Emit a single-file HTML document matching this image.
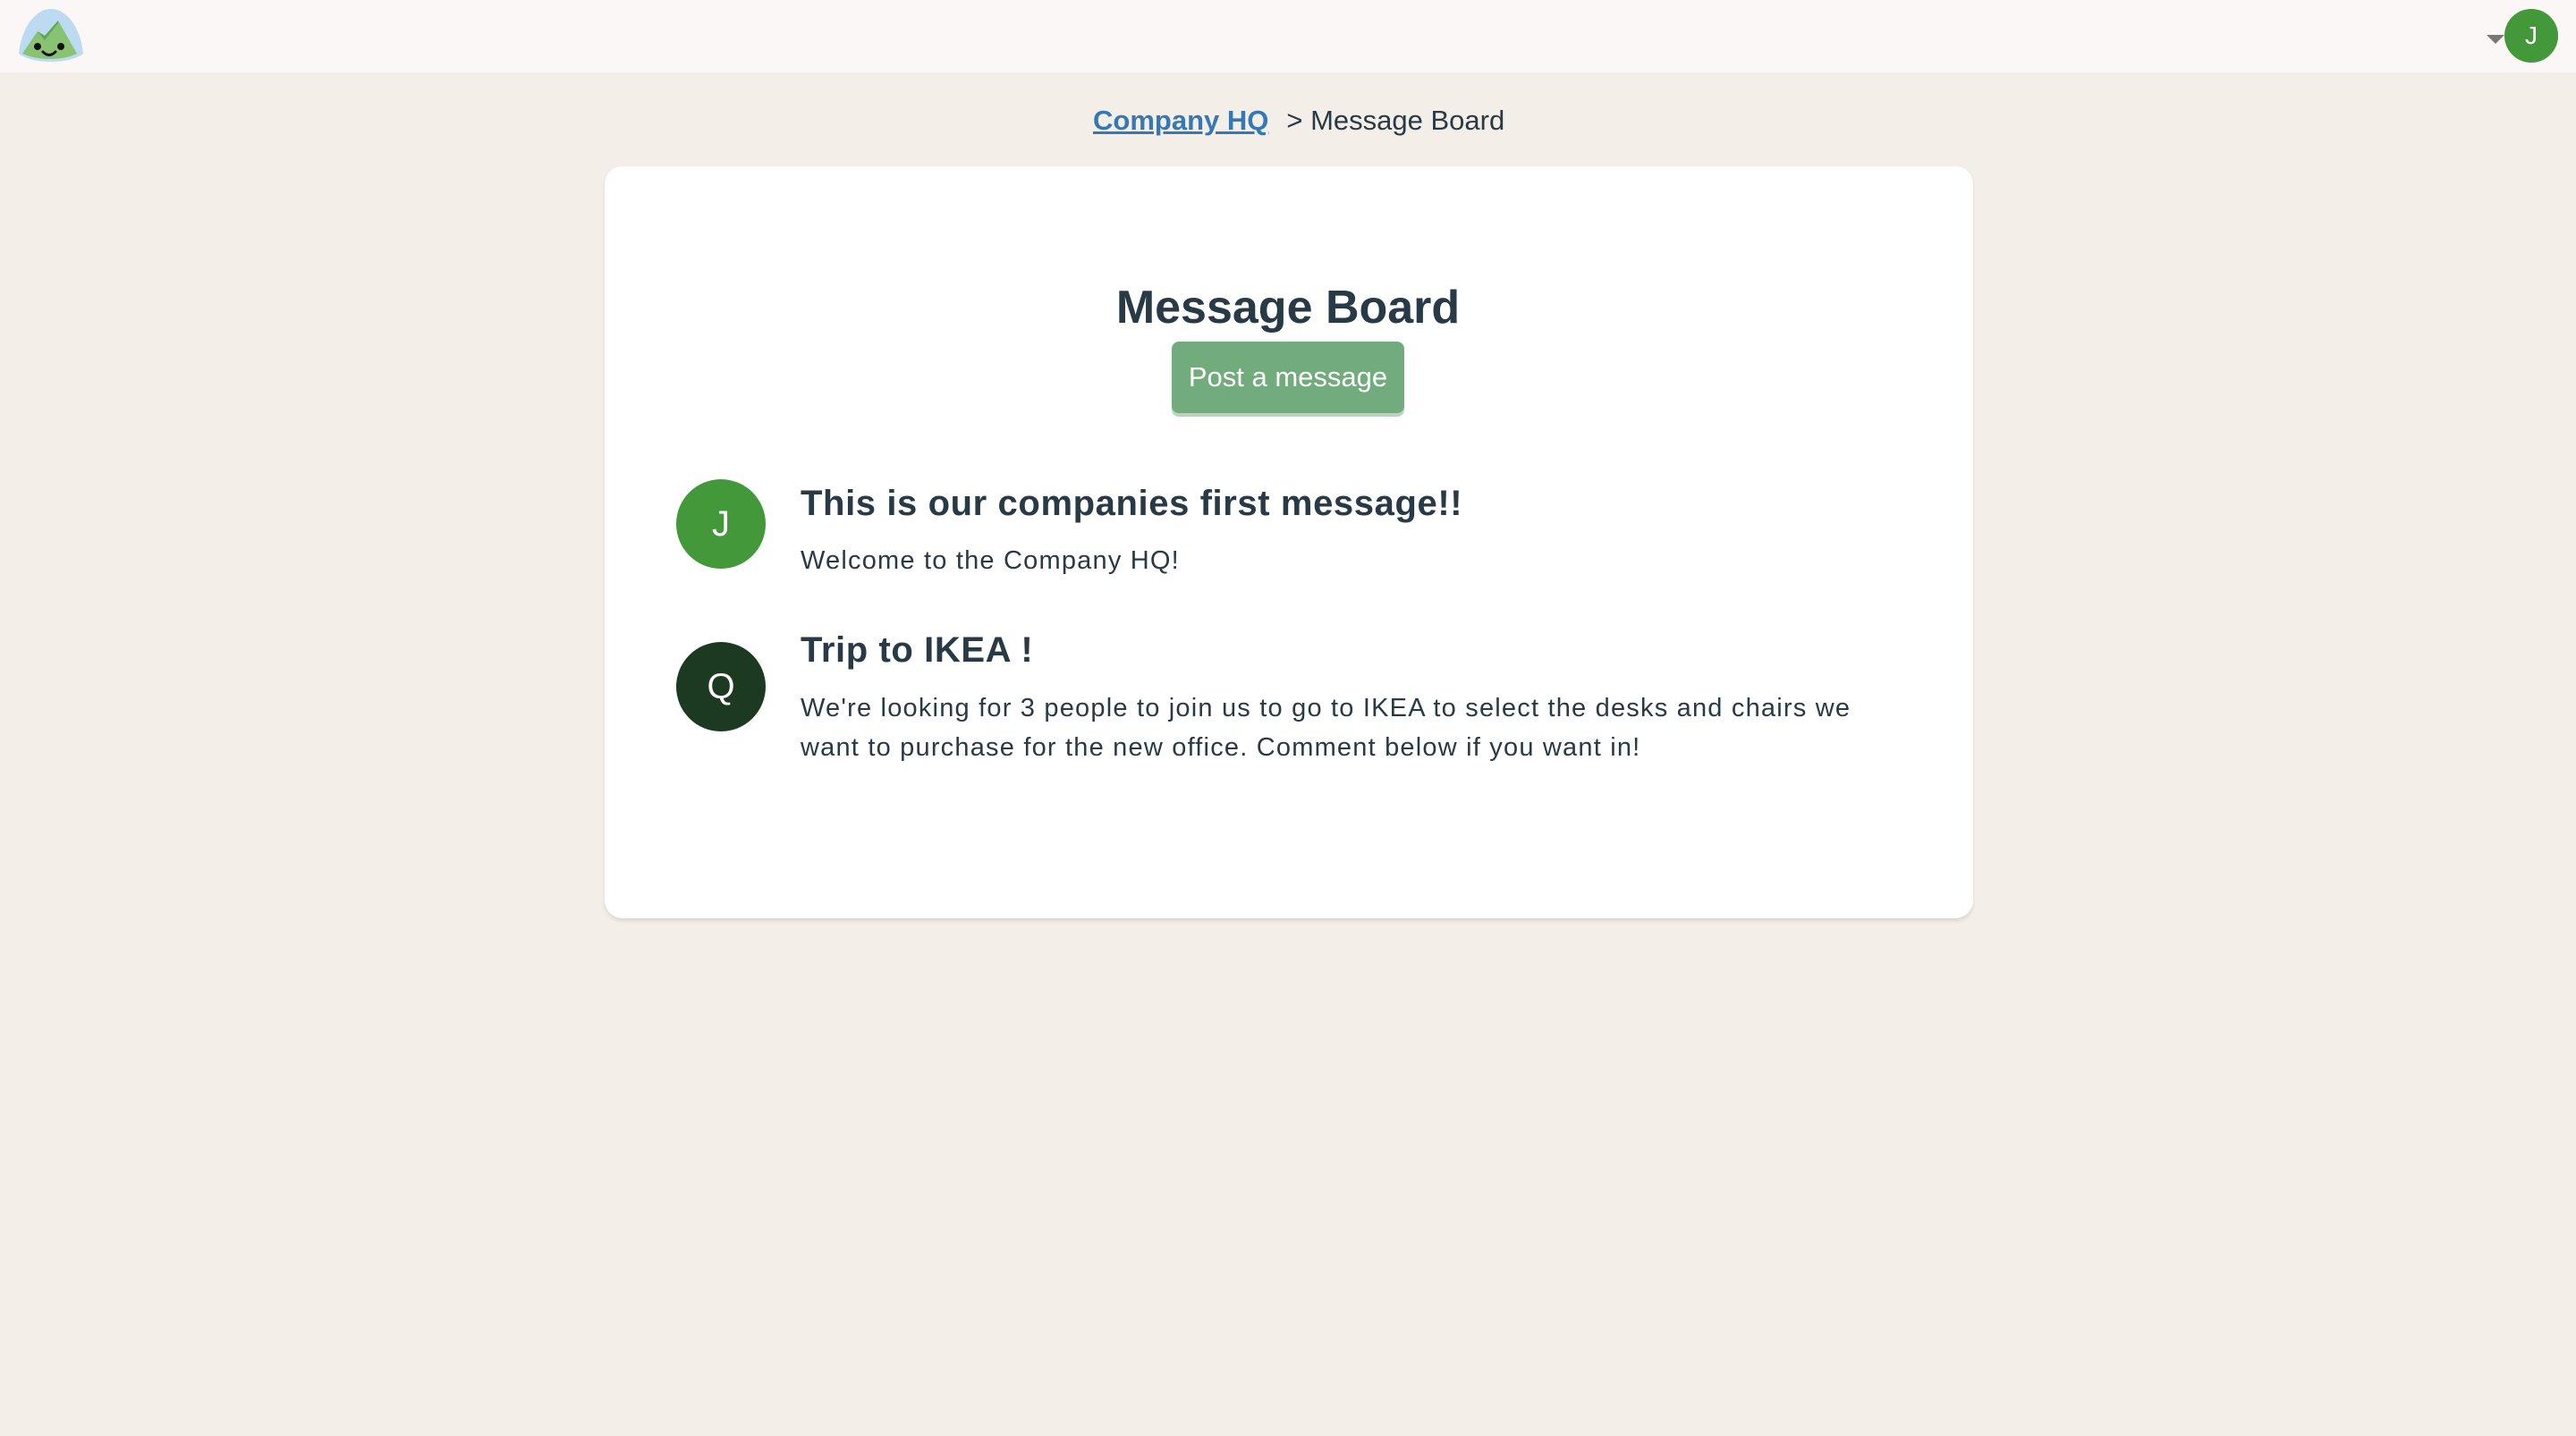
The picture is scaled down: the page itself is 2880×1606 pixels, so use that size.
<!DOCTYPE html>
<html><head><meta charset="utf-8"><style>
*{margin:0;padding:0;box-sizing:border-box}
body{width:2880px;height:1606px;background:#f3eee8;font-family:"Liberation Sans","DejaVu Sans",sans-serif;color:#283a45;position:relative;overflow:hidden}
.hdr{position:absolute;left:0;top:0;width:2880px;height:81px;background:#faf7f6}
.abs{position:absolute;white-space:nowrap}
.card{position:absolute;left:676px;top:186px;width:1530px;height:841px;background:#fff;border-radius:20px;box-shadow:0 3px 4px rgba(0,0,0,0.1)}
.av{position:absolute;width:100px;height:100px;border-radius:50%;color:#fff;font-size:40px;text-align:center;line-height:100px}
.btn{position:absolute;left:1310px;top:382px;width:260px;height:80px;background:#72ac7c;border-radius:8px;box-shadow:0 4px 0 #b7d5bb;color:#fff;font-size:31px;text-align:center;line-height:80px}
</style></head><body>
<div class="hdr"></div>
<svg style="position:absolute;left:18px;top:8px" width="78" height="66" viewBox="0 0 78 66">
<path d="M3 52 C6 22 22 2 39 2 C56 2 72 22 75 52 C60 64 18 64 3 52Z" fill="#bcdaf0"/>
<path d="M7 52 L24 27 L32 32 L47 15 L68 52 C52 60 24 60 7 52Z" fill="#8ac274"/>
<path d="M24 27 L32 37 L47 18 L47 15 L32 32Z" fill="#5aa85a"/>
<circle cx="24" cy="44" r="4" fill="#111"/><circle cx="50" cy="44" r="4" fill="#111"/>
<path d="M30 50 Q37 57 44 50" stroke="#111" stroke-width="3" fill="none" stroke-linecap="round"/>
</svg>
<svg style="position:absolute;left:2780px;top:39px" width="20" height="12"><path d="M0 0 L20 0 L10 10Z" fill="#777"/></svg>
<div class="av" style="left:2800px;top:10px;width:60px;height:60px;line-height:60px;font-size:28px;background:#43983a">J</div>
<div class="abs" style="left:1222px;top:114px;font-size:31px;line-height:42px"><span style="color:#3478b5;font-weight:bold;text-decoration:underline;text-decoration-thickness:3px">Company HQ</span><span style="margin-left:20px;color:#283a45">&gt; Message Board</span></div>
<div class="card"></div>
<div class="abs" style="left:0;width:2880px;text-align:center;top:309px;font-size:52px;font-weight:bold;line-height:70px">Message Board</div>
<div class="btn">Post a message</div>
<div class="av" style="left:756px;top:536px;background:#43983a">J</div>
<div class="abs" style="left:895px;top:538px;font-size:40px;font-weight:bold;line-height:50px;letter-spacing:0.6px">This is our companies first message!!</div>
<div class="abs" style="left:895px;top:606px;font-size:29px;line-height:42px;letter-spacing:1.2px">Welcome to the Company HQ!</div>
<div class="av" style="left:756px;top:718px;background:#1c3a22">Q</div>
<div class="abs" style="left:895px;top:702px;font-size:40px;font-weight:bold;line-height:50px;letter-spacing:0.6px">Trip to IKEA !</div>
<div class="abs" style="left:895px;top:770px;font-size:29px;line-height:44px;letter-spacing:1.2px">We're looking for 3 people to join us to go to IKEA to select the desks and chairs we<br>want to purchase for the new office. Comment below if you want in!</div>
</body></html>
